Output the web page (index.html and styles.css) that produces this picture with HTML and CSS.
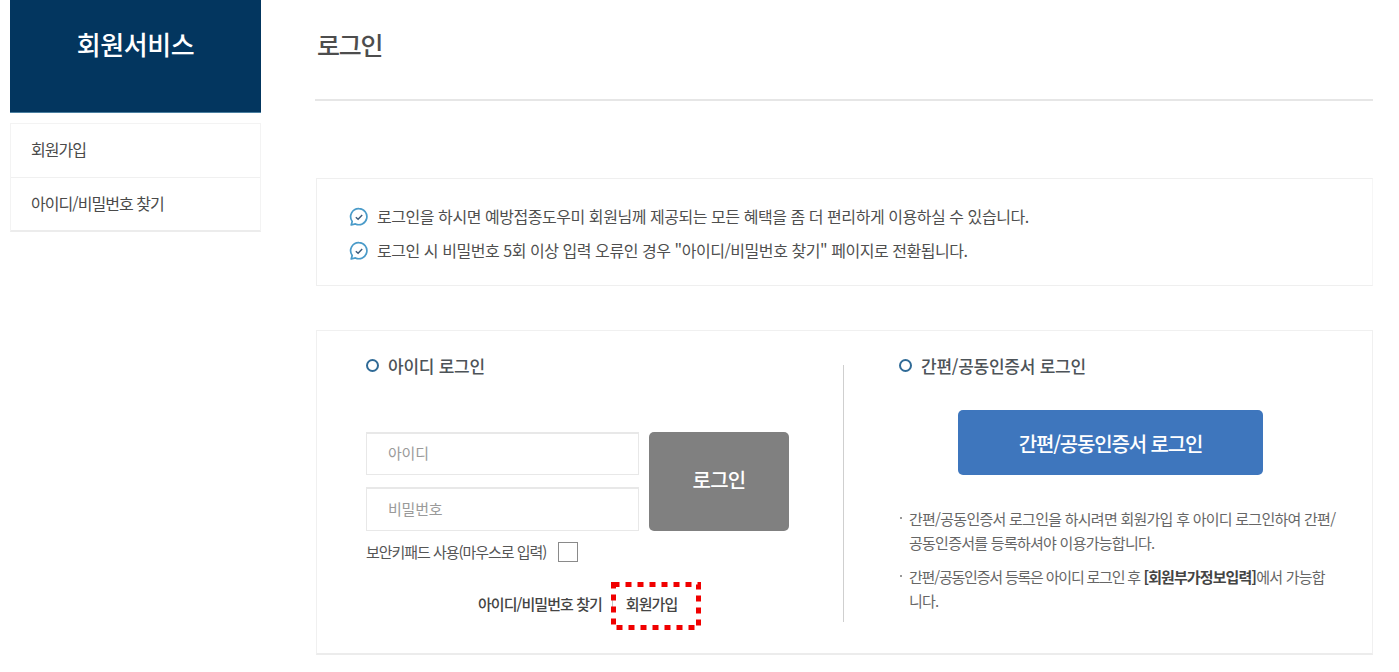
FILE: index.html
```html
<!DOCTYPE html>
<html lang="ko">
<head>
<meta charset="utf-8">
<title>로그인</title>
<link rel="stylesheet" href="styles.css">
</head>
<body>
<div class="page">
  <aside class="side">
    <h2 class="side-title">회원서비스</h2>
    <ul class="side-menu">
      <li>회원가입</li>
      <li>아이디/비밀번호 찾기</li>
    </ul>
  </aside>
  <main class="main">
    <h1 class="page-title">로그인</h1>
    <section class="notice">
      <p class="notice-row">
        <svg class="chat" viewBox="0 0 20 20"><path d="M10 1.7a8 8 0 1 1-3.6 15.2L2.2 18l1-3.6A8 8 0 0 1 10 1.7z" fill="none" stroke="#4a9bc9" stroke-width="1.7" stroke-linejoin="round"/><path d="M6.8 10.2l2.3 2.1 4.1-4.3" fill="none" stroke="#3d5a78" stroke-width="1.4"/></svg>
        <span>로그인을 하시면 예방접종도우미 회원님께 제공되는 모든 혜택을 좀 더 편리하게 이용하실 수 있습니다.</span>
      </p>
      <p class="notice-row">
        <svg class="chat" viewBox="0 0 20 20"><path d="M10 1.7a8 8 0 1 1-3.6 15.2L2.2 18l1-3.6A8 8 0 0 1 10 1.7z" fill="none" stroke="#4a9bc9" stroke-width="1.7" stroke-linejoin="round"/><path d="M6.8 10.2l2.3 2.1 4.1-4.3" fill="none" stroke="#3d5a78" stroke-width="1.4"/></svg>
        <span>로그인 시 비밀번호 5회 이상 입력 오류인 경우 "아이디/비밀번호 찾기" 페이지로 전환됩니다.</span>
      </p>
    </section>
    <section class="login">
      <div class="col col-id">
        <h3 class="col-title"><i class="ring"></i>아이디 로그인</h3>
        <div class="form">
          <div class="fields">
            <div class="field field-id">아이디</div>
            <div class="field field-pw">비밀번호</div>
          </div>
          <div class="btn-login">로그인</div>
        </div>
        <div class="keypad"><span>보안키패드 사용(마우스로 입력)</span><i class="check"></i></div>
        <div class="links">
          <span>아이디/비밀번호 찾기</span>
          <span class="join">회원가입
            <svg class="mark" viewBox="0 0 90 48"><rect x="2.5" y="2.5" width="85" height="43" fill="none" stroke="#f00000" stroke-width="5" stroke-dasharray="6 6"/></svg>
          </span>
        </div>
      </div>
      <div class="col col-cert">
        <h3 class="col-title"><i class="ring"></i>간편/공동인증서 로그인</h3>
        <div class="btn-cert">간편/공동인증서 로그인</div>
        <ul class="guide">
          <li>간편/공동인증서 로그인을 하시려면 회원가입 후 아이디 로그인하여 간편/공동인증서를 등록하셔야 이용가능합니다.</li>
          <li><span class="tight">간편/공동인증서 등록은 아이디 로그인 후</span> <b>[회원부가정보입력]</b>에서 가능합<br>니다.</li>
        </ul>
      </div>
    </section>
  </main>
</div>
</body>
</html>
```
FILE: styles.css
```css
* { box-sizing: border-box; }
html, body { margin: 0; padding: 0; background: #fff; }
body {
  font-family: "Noto Sans CJK KR", "Noto Sans", sans-serif;
  color: #444;
  overflow: hidden;
}
h1, h2, h3, p, ul { margin: 0; padding: 0; font-weight: 400; }
ul { list-style: none; }
.page {
  display: flex;
  width: 1399px;
  height: 672px;
  padding-left: 10px;
}
.side { width: 251px; flex: none; }
.side-title {
  height: 113px;
  padding-top: 24px;
  background: #03365f;
  border-bottom: 1px solid #4a7fa0;
  color: #fff;
  font-size: 26px;
  line-height: 40px;
  font-weight: 500;
  letter-spacing: -0.4px;
  text-align: center;
}
.side-menu {
  margin-top: 10px;
  border: 1px solid #f3f3f3;
  border-bottom: 2px solid #ececec;
}
.side-menu li {
  height: 53px;
  padding-left: 20px;
  font-size: 16px;
  line-height: 50px;
  letter-spacing: -0.95px;
  color: #4a4a4a;
}
.side-menu li + li { border-top: 1px solid #f0f0f0; }
.main { width: 1058px; margin-left: 54px; }
.page-title {
  height: 101px;
  padding: 23px 0 0 2px;
  border-bottom: 2px solid #e6e6e6;
  font-size: 25px;
  line-height: 42px;
  letter-spacing: -1.2px;
  font-weight: 500;
  color: #4d4d4d;
}
.notice {
  height: 108px;
  margin: 77px 0 0 1px;
  padding-top: 20px;
  padding-left: 32px;
  border: 1px solid #efefef;
  border-right-color: #f6f6f6;
}
.notice-row {
  display: flex;
  align-items: center;
  gap: 8px;
  height: 34px;
  font-size: 16px;
  letter-spacing: -0.45px;
  color: #4f4f4f;
}
.chat { width: 20px; height: 20px; flex: none; margin-top: 2px; }
.login {
  display: flex;
  height: 325px;
  margin: 44px 0 0 1px;
  border: 1px solid #f0f0f0;
  border-bottom: 2px solid #ececec;
}
.col { position: relative; }
.col-id { width: 527px; padding: 21px 0 0 49px; }
.col-id::after {
  content: "";
  position: absolute;
  top: 34px;
  right: 0;
  width: 1px;
  height: 257px;
  background: #cfcfcf;
}
.col-cert { flex: 1; padding: 21px 0 0 55px; }
.col-title {
  display: flex;
  align-items: center;
  height: 26px;
  font-size: 17px;
  font-weight: 500;
  letter-spacing: -0.25px;
  color: #4d5358;
}
.ring {
  width: 13px;
  height: 13px;
  margin-right: 9px;
  border: 2px solid #2f6a96;
  border-radius: 50%;
}
.form { display: flex; gap: 10px; margin-top: 54px; }
.fields { width: 273px; }
.field {
  width: 273px;
  padding-left: 21px;
  border: 1px solid #e8e8e8;
  border-top-width: 2px;
  font-size: 15px;
  color: #9a9a9a;
  letter-spacing: -0.2px;
}
.field-id { height: 43px; line-height: 38px; }
.field-pw { height: 44px; margin-top: 12px; line-height: 39px; }
.btn-login {
  width: 140px;
  height: 99px;
  border-radius: 5px;
  background: #808080;
  color: #fff;
  font-size: 20px;
  font-weight: 500;
  line-height: 95px;
  letter-spacing: -0.8px;
  text-align: center;
}
.keypad {
  display: flex;
  align-items: center;
  gap: 12px;
  height: 21px;
  margin-top: 10px;
  font-size: 15px;
  letter-spacing: -1.04px;
  color: #555;
}
.check {
  width: 20px;
  height: 20px;
  border: 1px solid #8a8a8a;
  background: #fff;
}
.links {
  display: flex;
  height: 22px;
  margin-top: 31px;
  margin-left: 112px;
  font-size: 15px;
  line-height: 22px;
  font-weight: 500;
  letter-spacing: -0.95px;
  color: #444;
}
.join {
  position: relative;
  margin-left: 24px;
}
.join::before {
  content: "";
  position: absolute;
  left: -14px;
  top: 4px;
  width: 1px;
  height: 15px;
  background: #c4c4c4;
}
.mark {
  position: absolute;
  left: -15px;
  top: -11px;
  width: 90px;
  height: 48px;
}
.btn-cert {
  width: 305px;
  height: 65px;
  margin: 32px 0 0 59px;
  border-radius: 5px;
  background: #3e76bd;
  color: #fff;
  font-size: 20px;
  font-weight: 500;
  line-height: 67px;
  letter-spacing: -1.15px;
  text-align: center;
}
.guide { width: 437px; margin-top: 32px; }
.guide li {
  position: relative;
  padding-left: 10px;
  margin-bottom: 9px;
  font-size: 15px;
  line-height: 24px;
  letter-spacing: -0.74px;
  color: #666;
}
.guide li + li { margin-top: 10px; }
.guide li::before {
  content: "";
  position: absolute;
  left: 1px;
  top: 10px;
  width: 2px;
  height: 2px;
  background: #999;
}
.tight { letter-spacing: -1.2px; }
.guide b { font-weight: 700; color: #444; letter-spacing: -0.9px; }
```
